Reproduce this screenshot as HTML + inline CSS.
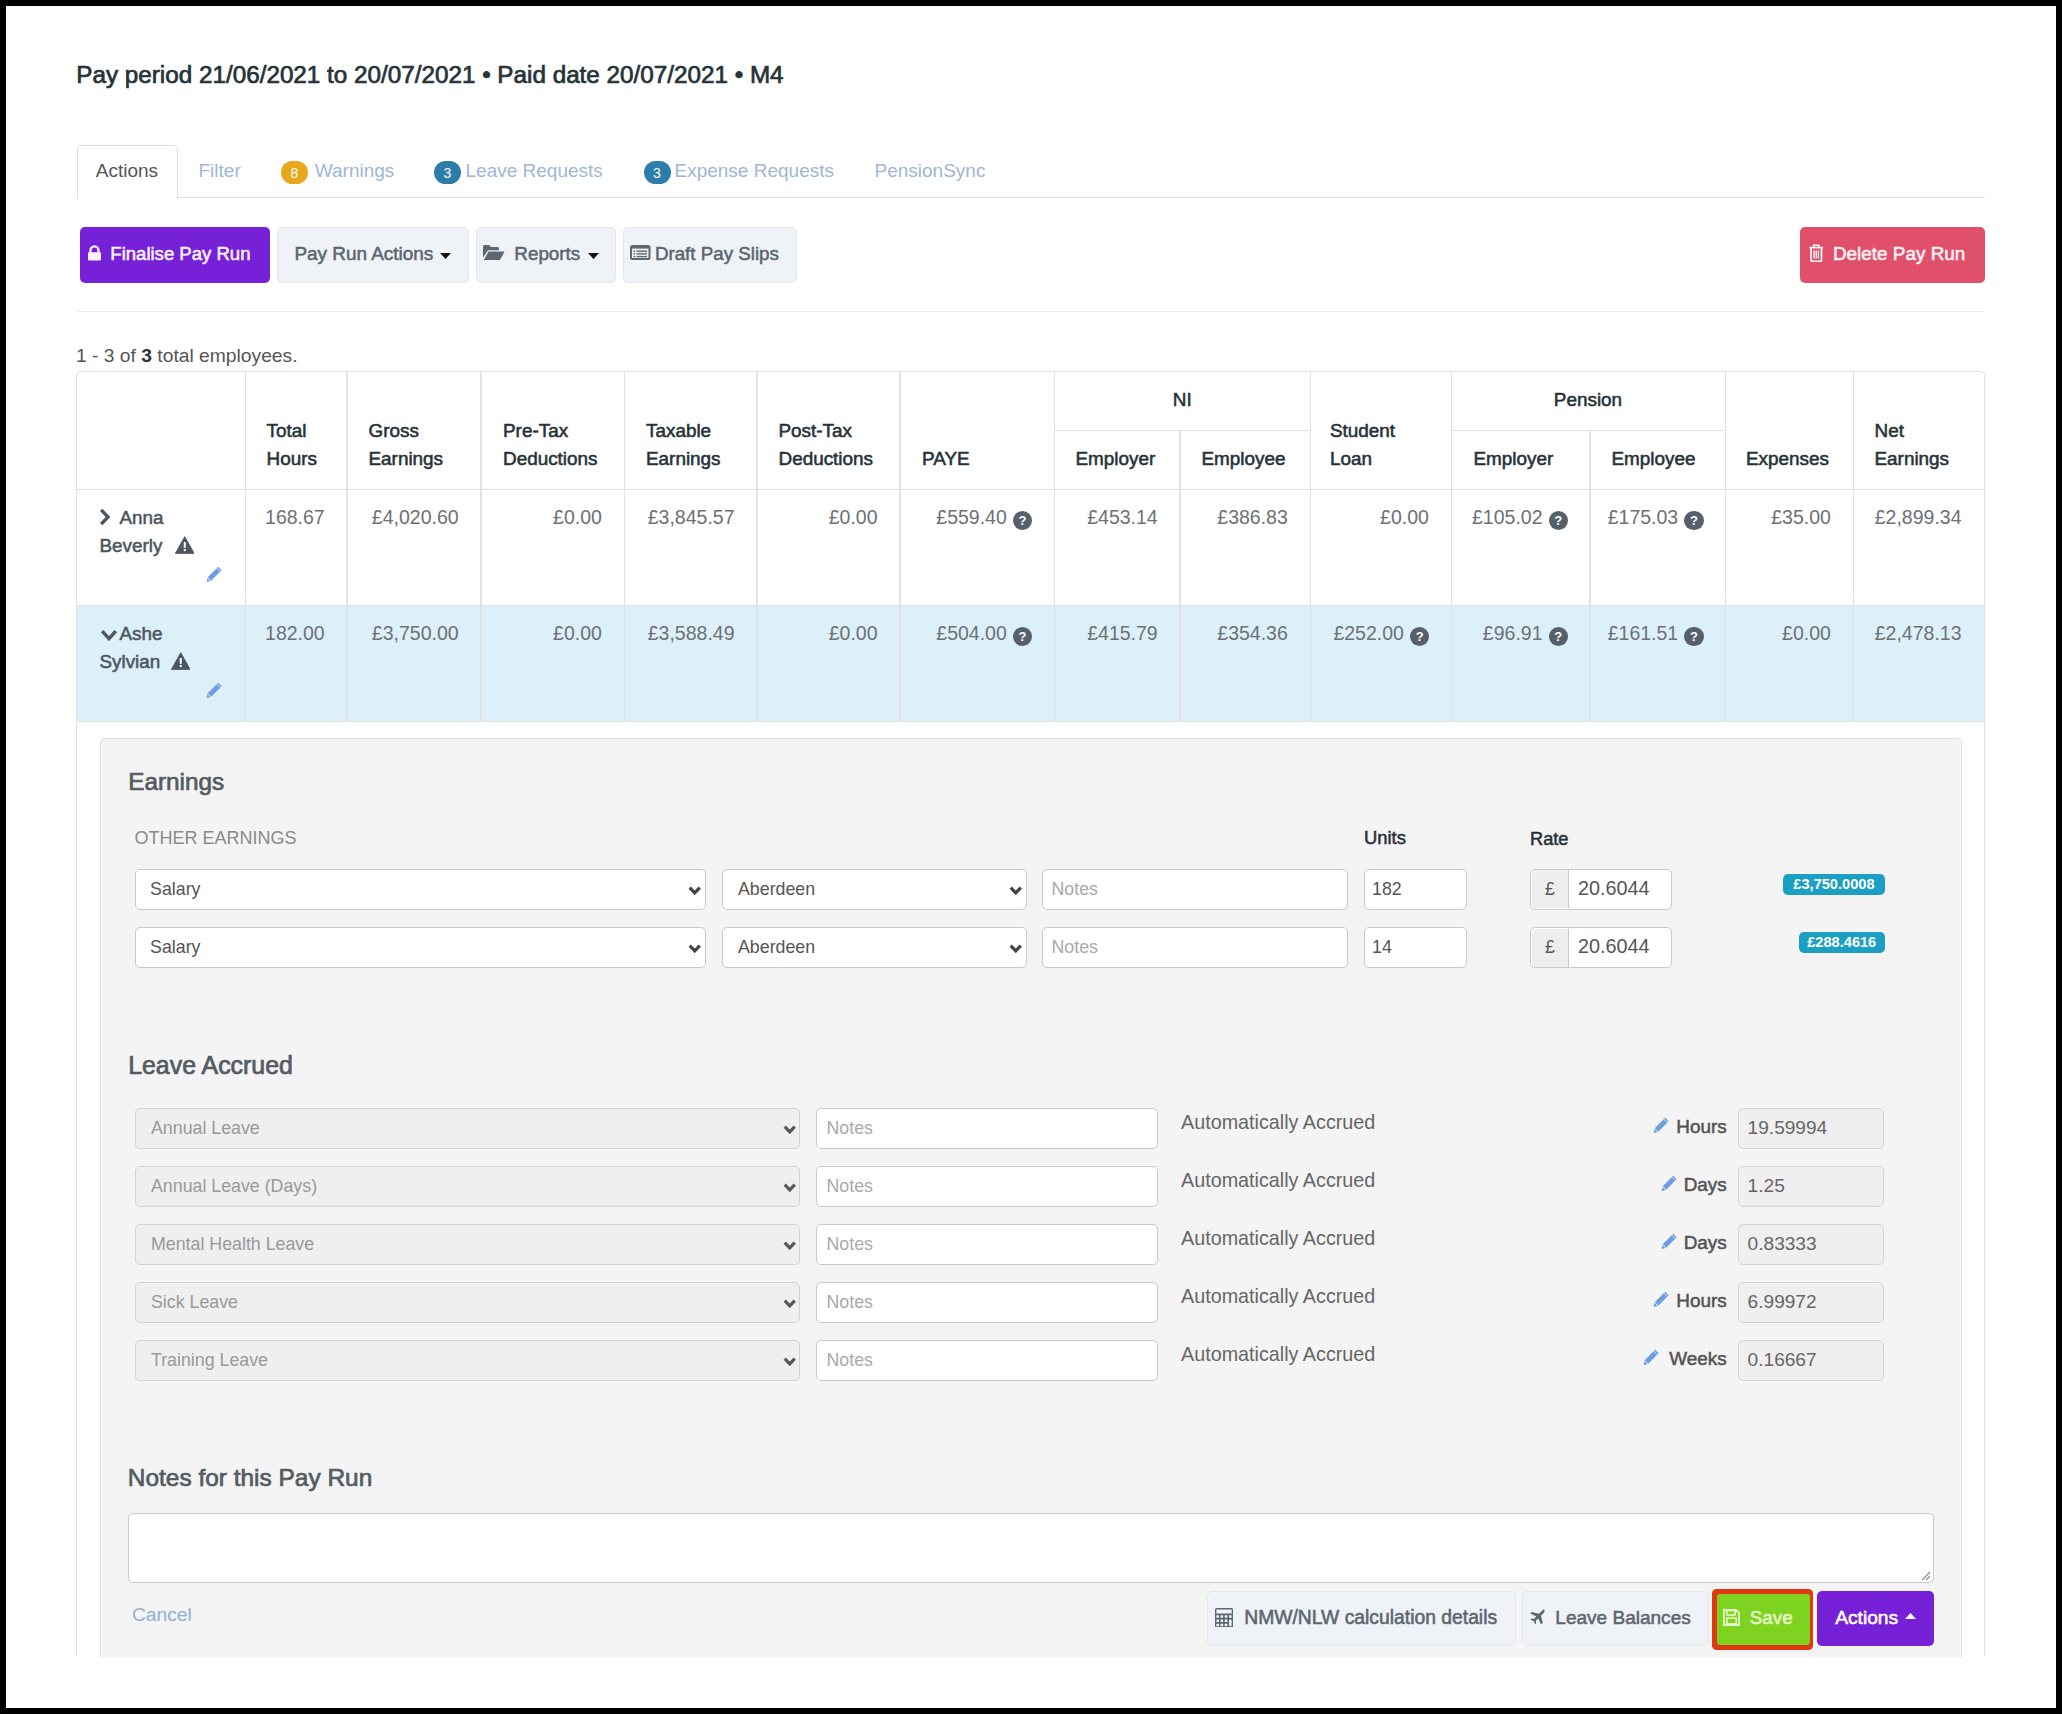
<!DOCTYPE html>
<html><head><meta charset="utf-8"><title>Pay Run</title>
<style>
html,body{margin:0;padding:0;}
body{width:2062px;height:1714px;background:#000;position:relative;overflow:hidden;font-family:'Liberation Sans', sans-serif;}
.t{position:absolute;white-space:nowrap;font-family:'Liberation Sans', sans-serif;}
.b{position:absolute;display:block;}
</style></head><body>
<div class="b" style="left:6.00px;top:6.00px;width:2050.00px;height:1702.00px;background:#fff;"></div>
<div class="t" style="left:76.30px;top:62.77px;font-size:24.25px;line-height:24.25px;font-weight:400;color:#263238;-webkit-text-stroke:0.71px #263238;">Pay period 21/06/2021 to 20/07/2021 • Paid date 20/07/2021 • M4</div>
<div class="b" style="left:77.00px;top:196.60px;width:1908.00px;height:1.50px;background:#dedede;"></div>
<div class="b" style="left:76.50px;top:144.50px;width:101.00px;height:54.50px;background:#fff;border:1.5px solid #dedede;border-bottom:none;border-radius:5px 5px 0 0;box-sizing:border-box;"></div>
<div class="t" style="left:95.80px;top:160.62px;font-size:19px;line-height:19px;font-weight:400;color:#555;">Actions</div>
<div class="t" style="left:198.50px;top:160.62px;font-size:19px;line-height:19px;font-weight:400;color:#a0b6d6;">Filter</div>
<div class="b" style="left:281.00px;top:161.00px;width:27.00px;height:23.00px;background:#e9a81c;border-radius:12px;"></div>
<div class="t" style="left:-5.50px;width:600px;text-align:center;top:165.65px;font-size:14px;line-height:14px;font-weight:400;color:#fff;">8</div>
<div class="t" style="left:314.80px;top:160.62px;font-size:19px;line-height:19px;font-weight:400;color:#a0b6d6;">Warnings</div>
<div class="b" style="left:434.00px;top:161.00px;width:27.00px;height:23.00px;background:#2c7da9;border-radius:12px;"></div>
<div class="t" style="left:147.50px;width:600px;text-align:center;top:165.65px;font-size:14px;line-height:14px;font-weight:400;color:#fff;">3</div>
<div class="t" style="left:465.50px;top:160.62px;font-size:19px;line-height:19px;font-weight:400;color:#a0b6d6;">Leave Requests</div>
<div class="b" style="left:643.50px;top:161.00px;width:27.00px;height:23.00px;background:#2c7da9;border-radius:12px;"></div>
<div class="t" style="left:357.00px;width:600px;text-align:center;top:165.65px;font-size:14px;line-height:14px;font-weight:400;color:#fff;">3</div>
<div class="t" style="left:674.50px;top:160.62px;font-size:19px;line-height:19px;font-weight:400;color:#a0b6d6;">Expense Requests</div>
<div class="t" style="left:874.50px;top:160.62px;font-size:19px;line-height:19px;font-weight:400;color:#a0b6d6;">PensionSync</div>
<div class="b" style="left:80.00px;top:226.50px;width:190.00px;height:56.50px;background:#7620d8;border-radius:5px;"></div>
<svg class="b" style="left:87.90px;top:245.00px;width:13.00px;height:15.50px;" viewBox="0 0 13 15.5" preserveAspectRatio="none"><path d="M2.5 7.8V5.3a4 4 0 0 1 8 0V7.8" stroke="#fdf2ff" stroke-width="2.3" fill="none"/><rect x="0" y="7.3" width="13" height="8.1" rx="1" fill="#fdf2ff"/></svg>
<div class="t" style="left:110.30px;top:245.29px;font-size:18.56px;line-height:18.56px;font-weight:400;color:#fbf0ff;-webkit-text-stroke:0.54px #fbf0ff;">Finalise Pay Run</div>
<div class="b" style="left:276.50px;top:226.50px;width:192.50px;height:56.50px;background:#eff3f7;border:1.5px solid #e3e7eb;border-radius:5px;box-sizing:border-box;"></div>
<div class="t" style="left:294.40px;top:244.97px;font-size:18.94px;line-height:18.94px;font-weight:400;color:#5c6670;-webkit-text-stroke:0.55px #5c6670;">Pay Run Actions</div>
<svg class="b" style="left:440.00px;top:252.50px;width:11.00px;height:6.00px;" viewBox="0 0 11 6" preserveAspectRatio="none"><path d="M0 0H11L5.5 6z" fill="#111"/></svg>
<div class="b" style="left:475.50px;top:226.50px;width:140.50px;height:56.50px;background:#eff3f7;border:1.5px solid #e3e7eb;border-radius:5px;box-sizing:border-box;"></div>
<svg class="b" style="left:483.00px;top:244.50px;width:21.50px;height:15.00px;" viewBox="0 0 21.5 15" preserveAspectRatio="none"><path d="M0 1.6A1.6 1.6 0 0 1 1.6 0H6L8 2H14.4A1.6 1.6 0 0 1 16 3.6V5.2H5L0 12.6Z" fill="#5d6770"/><path d="M5.6 6.6H21.5L17 15H0.8Z" fill="#5d6770"/></svg>
<div class="t" style="left:514.30px;top:245.04px;font-size:18.85px;line-height:18.85px;font-weight:400;color:#5c6670;-webkit-text-stroke:0.55px #5c6670;">Reports</div>
<svg class="b" style="left:587.50px;top:252.50px;width:11.00px;height:6.00px;" viewBox="0 0 11 6" preserveAspectRatio="none"><path d="M0 0H11L5.5 6z" fill="#111"/></svg>
<div class="b" style="left:622.50px;top:226.50px;width:174.50px;height:56.50px;background:#eff3f7;border:1.5px solid #e3e7eb;border-radius:5px;box-sizing:border-box;"></div>
<svg class="b" style="left:630.00px;top:245.00px;width:20.50px;height:15.00px;" viewBox="0 0 20.5 15" preserveAspectRatio="none"><rect x="1" y="1" width="18.5" height="13" rx="1.6" fill="none" stroke="#5d6770" stroke-width="2"/><rect x="1" y="1" width="18.5" height="2.6" fill="#5d6770"/><rect x="3.5" y="5.5" width="1.6" height="1.4" fill="#5d6770"/><rect x="6.5" y="5.5" width="10.5" height="1.4" fill="#5d6770"/><rect x="3.5" y="8.2" width="1.6" height="1.4" fill="#5d6770"/><rect x="6.5" y="8.2" width="10.5" height="1.4" fill="#5d6770"/><rect x="3.5" y="10.9" width="1.6" height="1.4" fill="#5d6770"/><rect x="6.5" y="10.9" width="10.5" height="1.4" fill="#5d6770"/></svg>
<div class="t" style="left:654.90px;top:245.13px;font-size:18.75px;line-height:18.75px;font-weight:400;color:#5c6670;-webkit-text-stroke:0.54px #5c6670;">Draft Pay Slips</div>
<div class="b" style="left:1800.00px;top:226.50px;width:185.00px;height:56.00px;background:#e1506a;border-radius:5px;"></div>
<svg class="b" style="left:1809.00px;top:244.00px;width:14.50px;height:18.00px;" viewBox="0 0 14.5 18" preserveAspectRatio="none"><path d="M0.5 3.6H14" stroke="#fff" stroke-width="1.6"/><path d="M4.6 3.4V1.2H9.9V3.4" stroke="#fff" stroke-width="1.5" fill="none"/><path d="M2 3.6V16.2A1.2 1.2 0 0 0 3.2 17.3H11.3A1.2 1.2 0 0 0 12.5 16.2V3.6" stroke="#fff" stroke-width="1.6" fill="none"/><path d="M5.1 6.5V14.5M7.25 6.5V14.5M9.4 6.5V14.5" stroke="#fff" stroke-width="1.3"/></svg>
<div class="t" style="left:1832.90px;top:244.98px;font-size:18.92px;line-height:18.92px;font-weight:400;color:#fff2f4;-webkit-text-stroke:0.55px #fff2f4;">Delete Pay Run</div>
<div class="b" style="left:77.00px;top:310.50px;width:1908.00px;height:1.50px;background:#ececec;"></div>
<div class="t" style="left:76.00px;top:346.00px;font-size:19.25px;line-height:19.25px;font-weight:400;color:#555;">1 - 3 of <b style="color:#333">3</b> total employees.</div>
<div class="b" style="left:77.00px;top:605.50px;width:1907.00px;height:116.00px;background:#dcf0f9;"></div>
<div class="b" style="left:76.20px;top:370.70px;width:1908.60px;height:1285.80px;border:1.6px solid #e2e2e2;border-bottom:none;border-radius:5px 5px 0 0;box-sizing:border-box;"></div>
<div class="b" style="left:77.00px;top:488.70px;width:1907.00px;height:1.60px;background:#e2e2e2;"></div>
<div class="b" style="left:77.00px;top:604.70px;width:1907.00px;height:1.60px;background:#e2e2e2;"></div>
<div class="b" style="left:77.00px;top:720.70px;width:1907.00px;height:1.60px;background:#e2e2e2;"></div>
<div class="b" style="left:1054.30px;top:429.70px;width:256.00px;height:1.60px;background:#e2e2e2;"></div>
<div class="b" style="left:1451.40px;top:429.70px;width:274.30px;height:1.60px;background:#e2e2e2;"></div>
<div class="b" style="left:244.60px;top:370.50px;width:1.60px;height:351.00px;background:#e2e2e2;"></div>
<div class="b" style="left:346.40px;top:370.50px;width:1.60px;height:351.00px;background:#e2e2e2;"></div>
<div class="b" style="left:480.30px;top:370.50px;width:1.60px;height:351.00px;background:#e2e2e2;"></div>
<div class="b" style="left:623.60px;top:370.50px;width:1.60px;height:351.00px;background:#e2e2e2;"></div>
<div class="b" style="left:756.20px;top:370.50px;width:1.60px;height:351.00px;background:#e2e2e2;"></div>
<div class="b" style="left:899.20px;top:370.50px;width:1.60px;height:351.00px;background:#e2e2e2;"></div>
<div class="b" style="left:1053.50px;top:370.50px;width:1.60px;height:351.00px;background:#e2e2e2;"></div>
<div class="b" style="left:1179.40px;top:430.50px;width:1.60px;height:291.00px;background:#e2e2e2;"></div>
<div class="b" style="left:1309.50px;top:370.50px;width:1.60px;height:351.00px;background:#e2e2e2;"></div>
<div class="b" style="left:1450.60px;top:370.50px;width:1.60px;height:351.00px;background:#e2e2e2;"></div>
<div class="b" style="left:1589.20px;top:430.50px;width:1.60px;height:291.00px;background:#e2e2e2;"></div>
<div class="b" style="left:1724.90px;top:370.50px;width:1.60px;height:351.00px;background:#e2e2e2;"></div>
<div class="b" style="left:1852.60px;top:370.50px;width:1.60px;height:351.00px;background:#e2e2e2;"></div>
<div class="t" style="left:266.50px;top:421.50px;font-size:18.9px;line-height:18.9px;font-weight:400;color:#263238;-webkit-text-stroke:0.55px #263238;">Total</div>
<div class="t" style="left:266.50px;top:449.90px;font-size:18.9px;line-height:18.9px;font-weight:400;color:#263238;-webkit-text-stroke:0.55px #263238;">Hours</div>
<div class="t" style="left:368.50px;top:421.50px;font-size:18.9px;line-height:18.9px;font-weight:400;color:#263238;-webkit-text-stroke:0.55px #263238;">Gross</div>
<div class="t" style="left:368.50px;top:449.90px;font-size:18.9px;line-height:18.9px;font-weight:400;color:#263238;-webkit-text-stroke:0.55px #263238;">Earnings</div>
<div class="t" style="left:503.00px;top:421.50px;font-size:18.9px;line-height:18.9px;font-weight:400;color:#263238;-webkit-text-stroke:0.55px #263238;">Pre-Tax</div>
<div class="t" style="left:503.00px;top:449.90px;font-size:18.9px;line-height:18.9px;font-weight:400;color:#263238;-webkit-text-stroke:0.55px #263238;">Deductions</div>
<div class="t" style="left:646.00px;top:421.50px;font-size:18.9px;line-height:18.9px;font-weight:400;color:#263238;-webkit-text-stroke:0.55px #263238;">Taxable</div>
<div class="t" style="left:646.00px;top:449.90px;font-size:18.9px;line-height:18.9px;font-weight:400;color:#263238;-webkit-text-stroke:0.55px #263238;">Earnings</div>
<div class="t" style="left:778.50px;top:421.50px;font-size:18.9px;line-height:18.9px;font-weight:400;color:#263238;-webkit-text-stroke:0.55px #263238;">Post-Tax</div>
<div class="t" style="left:778.50px;top:449.90px;font-size:18.9px;line-height:18.9px;font-weight:400;color:#263238;-webkit-text-stroke:0.55px #263238;">Deductions</div>
<div class="t" style="left:922.00px;top:449.90px;font-size:18.9px;line-height:18.9px;font-weight:400;color:#263238;-webkit-text-stroke:0.55px #263238;">PAYE</div>
<div class="t" style="left:882.30px;width:600px;text-align:center;top:390.80px;font-size:18.9px;line-height:18.9px;font-weight:400;color:#263238;-webkit-text-stroke:0.55px #263238;">NI</div>
<div class="t" style="left:1075.50px;top:449.90px;font-size:18.9px;line-height:18.9px;font-weight:400;color:#263238;-webkit-text-stroke:0.55px #263238;">Employer</div>
<div class="t" style="left:1201.50px;top:449.90px;font-size:18.9px;line-height:18.9px;font-weight:400;color:#263238;-webkit-text-stroke:0.55px #263238;">Employee</div>
<div class="t" style="left:1330.00px;top:421.50px;font-size:18.9px;line-height:18.9px;font-weight:400;color:#263238;-webkit-text-stroke:0.55px #263238;">Student</div>
<div class="t" style="left:1330.00px;top:449.90px;font-size:18.9px;line-height:18.9px;font-weight:400;color:#263238;-webkit-text-stroke:0.55px #263238;">Loan</div>
<div class="t" style="left:1288.00px;width:600px;text-align:center;top:390.80px;font-size:18.9px;line-height:18.9px;font-weight:400;color:#263238;-webkit-text-stroke:0.55px #263238;">Pension</div>
<div class="t" style="left:1473.50px;top:449.90px;font-size:18.9px;line-height:18.9px;font-weight:400;color:#263238;-webkit-text-stroke:0.55px #263238;">Employer</div>
<div class="t" style="left:1611.50px;top:449.90px;font-size:18.9px;line-height:18.9px;font-weight:400;color:#263238;-webkit-text-stroke:0.55px #263238;">Employee</div>
<div class="t" style="left:1746.00px;top:449.90px;font-size:18.9px;line-height:18.9px;font-weight:400;color:#263238;-webkit-text-stroke:0.55px #263238;">Expenses</div>
<div class="t" style="left:1874.50px;top:421.50px;font-size:18.9px;line-height:18.9px;font-weight:400;color:#263238;-webkit-text-stroke:0.55px #263238;">Net</div>
<div class="t" style="left:1874.50px;top:449.90px;font-size:18.9px;line-height:18.9px;font-weight:400;color:#263238;-webkit-text-stroke:0.55px #263238;">Earnings</div>
<svg class="b" style="left:99.30px;top:508.00px;width:11.50px;height:18.00px;" viewBox="0 0 11.5 18" preserveAspectRatio="none"><path d="M2.2 1.9L9 9L2.2 16.1" stroke="#4d5660" stroke-width="3.4" fill="none"/></svg>
<div class="t" style="left:119.50px;top:508.74px;font-size:18.85px;line-height:18.85px;font-weight:400;color:#4d5660;-webkit-text-stroke:0.55px #4d5660;">Anna</div>
<div class="t" style="left:99.50px;top:536.74px;font-size:18.85px;line-height:18.85px;font-weight:400;color:#4d5660;-webkit-text-stroke:0.55px #4d5660;">Beverly</div>
<svg class="b" style="left:174.80px;top:536.20px;width:19.50px;height:18.00px;" viewBox="0 0 19.5 18" preserveAspectRatio="none"><path d="M9.75 0.6L19.2 17.4H0.3Z" fill="#4d5660" stroke="#4d5660" stroke-width="0.8" stroke-linejoin="round"/><rect x="8.75" y="6" width="2" height="5.8" fill="#fff"/><rect x="8.75" y="13" width="2" height="2.1" fill="#fff"/></svg>
<svg class="b" style="left:205.50px;top:566.30px;width:16.50px;height:16.50px;" viewBox="0 0 16.5 16.5" preserveAspectRatio="none"><path d="M12.2 0.8L15.7 4.3L5.2 14.8L1.7 11.3Z" fill="#6e9de0"/><path d="M1.4 11.9L4.6 15.1L0.6 16Z" fill="#6e9de0"/><path d="M11 2.2L14.3 5.5" stroke="#fff" stroke-width="0.9" opacity="0.8"/><path d="M2.4 12.4L4.1 14.1" stroke="#fff" stroke-width="0.8" opacity="0.7"/></svg>
<svg class="b" style="left:99.50px;top:628.70px;width:18.00px;height:12.50px;" viewBox="0 0 18 12.5" preserveAspectRatio="none"><path d="M2.2 2.1L9 9.6L15.8 2.1" stroke="#4d5660" stroke-width="3.4" fill="none"/></svg>
<div class="t" style="left:119.50px;top:624.94px;font-size:18.85px;line-height:18.85px;font-weight:400;color:#4d5660;-webkit-text-stroke:0.55px #4d5660;">Ashe</div>
<div class="t" style="left:99.50px;top:652.94px;font-size:18.85px;line-height:18.85px;font-weight:400;color:#4d5660;-webkit-text-stroke:0.55px #4d5660;">Sylvian</div>
<svg class="b" style="left:170.80px;top:652.00px;width:19.50px;height:18.00px;" viewBox="0 0 19.5 18" preserveAspectRatio="none"><path d="M9.75 0.6L19.2 17.4H0.3Z" fill="#4d5660" stroke="#4d5660" stroke-width="0.8" stroke-linejoin="round"/><rect x="8.75" y="6" width="2" height="5.8" fill="#fff"/><rect x="8.75" y="13" width="2" height="2.1" fill="#fff"/></svg>
<svg class="b" style="left:205.50px;top:682.00px;width:16.50px;height:16.50px;" viewBox="0 0 16.5 16.5" preserveAspectRatio="none"><path d="M12.2 0.8L15.7 4.3L5.2 14.8L1.7 11.3Z" fill="#6e9de0"/><path d="M1.4 11.9L4.6 15.1L0.6 16Z" fill="#6e9de0"/><path d="M11 2.2L14.3 5.5" stroke="#fff" stroke-width="0.9" opacity="0.8"/><path d="M2.4 12.4L4.1 14.1" stroke="#fff" stroke-width="0.8" opacity="0.7"/></svg>
<div class="t" style="right:1737.30px;top:508.09px;font-size:19.5px;line-height:19.5px;font-weight:400;color:#6d7175;">168.67</div>
<div class="t" style="right:1603.40px;top:508.09px;font-size:19.5px;line-height:19.5px;font-weight:400;color:#6d7175;">£4,020.60</div>
<div class="t" style="right:1460.10px;top:508.09px;font-size:19.5px;line-height:19.5px;font-weight:400;color:#6d7175;">£0.00</div>
<div class="t" style="right:1327.50px;top:508.09px;font-size:19.5px;line-height:19.5px;font-weight:400;color:#6d7175;">£3,845.57</div>
<div class="t" style="right:1184.50px;top:508.09px;font-size:19.5px;line-height:19.5px;font-weight:400;color:#6d7175;">£0.00</div>
<div class="b" style="left:1012.80px;top:510.60px;width:19.5px;height:19.5px;border-radius:50%;background:#56606a;color:#fff;font:700 13px/19.5px 'Liberation Sans', sans-serif;text-align:center;">?</div>
<div class="t" style="right:1055.20px;top:508.09px;font-size:19.5px;line-height:19.5px;font-weight:400;color:#6d7175;">£559.40</div>
<div class="t" style="right:904.30px;top:508.09px;font-size:19.5px;line-height:19.5px;font-weight:400;color:#6d7175;">£453.14</div>
<div class="t" style="right:774.20px;top:508.09px;font-size:19.5px;line-height:19.5px;font-weight:400;color:#6d7175;">£386.83</div>
<div class="t" style="right:633.10px;top:508.09px;font-size:19.5px;line-height:19.5px;font-weight:400;color:#6d7175;">£0.00</div>
<div class="b" style="left:1548.50px;top:510.60px;width:19.5px;height:19.5px;border-radius:50%;background:#56606a;color:#fff;font:700 13px/19.5px 'Liberation Sans', sans-serif;text-align:center;">?</div>
<div class="t" style="right:519.50px;top:508.09px;font-size:19.5px;line-height:19.5px;font-weight:400;color:#6d7175;">£105.02</div>
<div class="b" style="left:1684.20px;top:510.60px;width:19.5px;height:19.5px;border-radius:50%;background:#56606a;color:#fff;font:700 13px/19.5px 'Liberation Sans', sans-serif;text-align:center;">?</div>
<div class="t" style="right:383.80px;top:508.09px;font-size:19.5px;line-height:19.5px;font-weight:400;color:#6d7175;">£175.03</div>
<div class="t" style="right:231.10px;top:508.09px;font-size:19.5px;line-height:19.5px;font-weight:400;color:#6d7175;">£35.00</div>
<div class="t" style="right:100.50px;top:508.09px;font-size:19.5px;line-height:19.5px;font-weight:400;color:#6d7175;">£2,899.34</div>
<div class="t" style="right:1737.30px;top:624.09px;font-size:19.5px;line-height:19.5px;font-weight:400;color:#6d7175;">182.00</div>
<div class="t" style="right:1603.40px;top:624.09px;font-size:19.5px;line-height:19.5px;font-weight:400;color:#6d7175;">£3,750.00</div>
<div class="t" style="right:1460.10px;top:624.09px;font-size:19.5px;line-height:19.5px;font-weight:400;color:#6d7175;">£0.00</div>
<div class="t" style="right:1327.50px;top:624.09px;font-size:19.5px;line-height:19.5px;font-weight:400;color:#6d7175;">£3,588.49</div>
<div class="t" style="right:1184.50px;top:624.09px;font-size:19.5px;line-height:19.5px;font-weight:400;color:#6d7175;">£0.00</div>
<div class="b" style="left:1012.80px;top:626.60px;width:19.5px;height:19.5px;border-radius:50%;background:#56606a;color:#fff;font:700 13px/19.5px 'Liberation Sans', sans-serif;text-align:center;">?</div>
<div class="t" style="right:1055.20px;top:624.09px;font-size:19.5px;line-height:19.5px;font-weight:400;color:#6d7175;">£504.00</div>
<div class="t" style="right:904.30px;top:624.09px;font-size:19.5px;line-height:19.5px;font-weight:400;color:#6d7175;">£415.79</div>
<div class="t" style="right:774.20px;top:624.09px;font-size:19.5px;line-height:19.5px;font-weight:400;color:#6d7175;">£354.36</div>
<div class="b" style="left:1409.90px;top:626.60px;width:19.5px;height:19.5px;border-radius:50%;background:#56606a;color:#fff;font:700 13px/19.5px 'Liberation Sans', sans-serif;text-align:center;">?</div>
<div class="t" style="right:658.10px;top:624.09px;font-size:19.5px;line-height:19.5px;font-weight:400;color:#6d7175;">£252.00</div>
<div class="b" style="left:1548.50px;top:626.60px;width:19.5px;height:19.5px;border-radius:50%;background:#56606a;color:#fff;font:700 13px/19.5px 'Liberation Sans', sans-serif;text-align:center;">?</div>
<div class="t" style="right:519.50px;top:624.09px;font-size:19.5px;line-height:19.5px;font-weight:400;color:#6d7175;">£96.91</div>
<div class="b" style="left:1684.20px;top:626.60px;width:19.5px;height:19.5px;border-radius:50%;background:#56606a;color:#fff;font:700 13px/19.5px 'Liberation Sans', sans-serif;text-align:center;">?</div>
<div class="t" style="right:383.80px;top:624.09px;font-size:19.5px;line-height:19.5px;font-weight:400;color:#6d7175;">£161.51</div>
<div class="t" style="right:231.10px;top:624.09px;font-size:19.5px;line-height:19.5px;font-weight:400;color:#6d7175;">£0.00</div>
<div class="t" style="right:100.50px;top:624.09px;font-size:19.5px;line-height:19.5px;font-weight:400;color:#6d7175;">£2,478.13</div>
<div class="b" style="left:99.50px;top:737.50px;width:1862.50px;height:919.00px;background:#f4f4f4;border:1.5px solid #e2e2e2;border-bottom:none;border-radius:5px 5px 0 0;box-sizing:border-box;"></div>
<div class="t" style="left:128.20px;top:770.43px;font-size:24.3px;line-height:24.3px;font-weight:400;color:#545b62;-webkit-text-stroke:0.71px #545b62;">Earnings</div>
<div class="t" style="left:134.50px;top:828.76px;font-size:18px;line-height:18px;font-weight:400;color:#8a8a8a;">OTHER EARNINGS</div>
<div class="t" style="left:1364.00px;top:829.42px;font-size:18.4px;line-height:18.4px;font-weight:400;color:#263238;-webkit-text-stroke:0.53px #263238;">Units</div>
<div class="t" style="left:1530.00px;top:829.59px;font-size:18.2px;line-height:18.2px;font-weight:400;color:#263238;-webkit-text-stroke:0.53px #263238;">Rate</div>
<div class="b" style="left:135.00px;top:868.70px;width:571.00px;height:41.30px;background:#fff;border:1.6px solid #c9c9c9;border-radius:5px;box-sizing:border-box;"></div>
<div class="t" style="left:150.10px;top:880.63px;font-size:17.8px;line-height:17.8px;font-weight:400;color:#555;">Salary</div>
<svg class="b" style="left:687.50px;top:885.60px;width:13.50px;height:9.30px;" viewBox="0 0 13.5 9.3" preserveAspectRatio="none"><path d="M1.7 1.7L6.75 6.9L11.8 1.7" stroke="#444" stroke-width="3.2" fill="none"/></svg>
<div class="b" style="left:721.60px;top:868.70px;width:305.70px;height:41.30px;background:#fff;border:1.6px solid #c9c9c9;border-radius:5px;box-sizing:border-box;"></div>
<div class="t" style="left:738.00px;top:880.63px;font-size:17.8px;line-height:17.8px;font-weight:400;color:#555;">Aberdeen</div>
<svg class="b" style="left:1008.50px;top:885.60px;width:13.50px;height:9.30px;" viewBox="0 0 13.5 9.3" preserveAspectRatio="none"><path d="M1.7 1.7L6.75 6.9L11.8 1.7" stroke="#444" stroke-width="3.2" fill="none"/></svg>
<div class="b" style="left:1042.40px;top:868.70px;width:305.60px;height:41.30px;background:#fff;border:1.6px solid #c9c9c9;border-radius:5px;box-sizing:border-box;"></div>
<div class="t" style="left:1051.50px;top:880.63px;font-size:17.8px;line-height:17.8px;font-weight:400;color:#aaa;">Notes</div>
<div class="b" style="left:1363.50px;top:868.70px;width:103.70px;height:41.30px;background:#fff;border:1.6px solid #c9c9c9;border-radius:5px;box-sizing:border-box;"></div>
<div class="t" style="left:1372.00px;top:880.63px;font-size:17.8px;line-height:17.8px;font-weight:400;color:#555;">182</div>
<div class="b" style="left:1530.40px;top:868.70px;width:141.60px;height:41.30px;background:#fff;border:1.6px solid #c9c9c9;border-radius:5px;box-sizing:border-box;"></div>
<div class="b" style="left:1532.00px;top:870.30px;width:36.20px;height:38.10px;background:#eeeeee;border-right:1.6px solid #c9c9c9;border-radius:4px 0 0 4px;"></div>
<div class="t" style="left:1544.90px;top:880.63px;font-size:17.8px;line-height:17.8px;font-weight:400;color:#555;">£</div>
<div class="t" style="left:1577.90px;top:878.94px;font-size:19.8px;line-height:19.8px;font-weight:400;color:#555;">20.6044</div>
<div class="b" style="left:1783.20px;top:873.90px;width:101.50px;height:20.80px;background:#1b9fc2;border-radius:5px;"></div>
<div class="t" style="left:1533.95px;width:600px;text-align:center;top:876.94px;font-size:14.6px;line-height:14.6px;font-weight:700;color:#fff;">£3,750.0008</div>
<div class="b" style="left:135.00px;top:927.00px;width:571.00px;height:41.30px;background:#fff;border:1.6px solid #c9c9c9;border-radius:5px;box-sizing:border-box;"></div>
<div class="t" style="left:150.10px;top:938.93px;font-size:17.8px;line-height:17.8px;font-weight:400;color:#555;">Salary</div>
<svg class="b" style="left:687.50px;top:943.90px;width:13.50px;height:9.30px;" viewBox="0 0 13.5 9.3" preserveAspectRatio="none"><path d="M1.7 1.7L6.75 6.9L11.8 1.7" stroke="#444" stroke-width="3.2" fill="none"/></svg>
<div class="b" style="left:721.60px;top:927.00px;width:305.70px;height:41.30px;background:#fff;border:1.6px solid #c9c9c9;border-radius:5px;box-sizing:border-box;"></div>
<div class="t" style="left:738.00px;top:938.93px;font-size:17.8px;line-height:17.8px;font-weight:400;color:#555;">Aberdeen</div>
<svg class="b" style="left:1008.50px;top:943.90px;width:13.50px;height:9.30px;" viewBox="0 0 13.5 9.3" preserveAspectRatio="none"><path d="M1.7 1.7L6.75 6.9L11.8 1.7" stroke="#444" stroke-width="3.2" fill="none"/></svg>
<div class="b" style="left:1042.40px;top:927.00px;width:305.60px;height:41.30px;background:#fff;border:1.6px solid #c9c9c9;border-radius:5px;box-sizing:border-box;"></div>
<div class="t" style="left:1051.50px;top:938.93px;font-size:17.8px;line-height:17.8px;font-weight:400;color:#aaa;">Notes</div>
<div class="b" style="left:1363.50px;top:927.00px;width:103.70px;height:41.30px;background:#fff;border:1.6px solid #c9c9c9;border-radius:5px;box-sizing:border-box;"></div>
<div class="t" style="left:1372.00px;top:938.93px;font-size:17.8px;line-height:17.8px;font-weight:400;color:#555;">14</div>
<div class="b" style="left:1530.40px;top:927.00px;width:141.60px;height:41.30px;background:#fff;border:1.6px solid #c9c9c9;border-radius:5px;box-sizing:border-box;"></div>
<div class="b" style="left:1532.00px;top:928.60px;width:36.20px;height:38.10px;background:#eeeeee;border-right:1.6px solid #c9c9c9;border-radius:4px 0 0 4px;"></div>
<div class="t" style="left:1544.90px;top:938.93px;font-size:17.8px;line-height:17.8px;font-weight:400;color:#555;">£</div>
<div class="t" style="left:1577.90px;top:937.24px;font-size:19.8px;line-height:19.8px;font-weight:400;color:#555;">20.6044</div>
<div class="b" style="left:1798.80px;top:932.20px;width:85.90px;height:20.80px;background:#1b9fc2;border-radius:5px;"></div>
<div class="t" style="left:1541.75px;width:600px;text-align:center;top:935.24px;font-size:14.6px;line-height:14.6px;font-weight:700;color:#fff;">£288.4616</div>
<div class="t" style="left:128.20px;top:1053.22px;font-size:24.9px;line-height:24.9px;font-weight:400;color:#545b62;-webkit-text-stroke:0.73px #545b62;">Leave Accrued</div>
<div class="b" style="left:135.40px;top:1107.70px;width:664.90px;height:41.20px;background:#efefef;border:1.6px solid #d3d3d3;border-radius:5px;box-sizing:border-box;"></div>
<div class="t" style="left:151.00px;top:1119.63px;font-size:17.8px;line-height:17.8px;font-weight:400;color:#999;">Annual Leave</div>
<svg class="b" style="left:782.50px;top:1124.60px;width:13.50px;height:9.30px;" viewBox="0 0 13.5 9.3" preserveAspectRatio="none"><path d="M1.7 1.7L6.75 6.9L11.8 1.7" stroke="#585858" stroke-width="3.2" fill="none"/></svg>
<div class="b" style="left:816.30px;top:1107.70px;width:341.90px;height:41.20px;background:#fff;border:1.6px solid #c9c9c9;border-radius:5px;box-sizing:border-box;"></div>
<div class="t" style="left:826.50px;top:1119.63px;font-size:17.8px;line-height:17.8px;font-weight:400;color:#aaa;">Notes</div>
<div class="t" style="left:1181.00px;top:1112.58px;font-size:19.75px;line-height:19.75px;font-weight:400;color:#666;">Automatically Accrued</div>
<div class="t" style="right:335.30px;top:1117.70px;font-size:18.9px;line-height:18.9px;font-weight:400;color:#555;-webkit-text-stroke:0.55px #555;">Hours</div>
<svg class="b" style="left:1652.60px;top:1117.30px;width:16.50px;height:16.50px;" viewBox="0 0 16.5 16.5" preserveAspectRatio="none"><path d="M12.2 0.8L15.7 4.3L5.2 14.8L1.7 11.3Z" fill="#6e9de0"/><path d="M1.4 11.9L4.6 15.1L0.6 16Z" fill="#6e9de0"/><path d="M11 2.2L14.3 5.5" stroke="#fff" stroke-width="0.9" opacity="0.8"/><path d="M2.4 12.4L4.1 14.1" stroke="#fff" stroke-width="0.8" opacity="0.7"/></svg>
<div class="b" style="left:1738.40px;top:1107.70px;width:145.60px;height:41.20px;background:#efefef;border:1.6px solid #d3d3d3;border-radius:5px;box-sizing:border-box;"></div>
<div class="t" style="left:1747.60px;top:1117.93px;font-size:19.1px;line-height:19.1px;font-weight:400;color:#666;">19.59994</div>
<div class="b" style="left:135.40px;top:1165.70px;width:664.90px;height:41.20px;background:#efefef;border:1.6px solid #d3d3d3;border-radius:5px;box-sizing:border-box;"></div>
<div class="t" style="left:151.00px;top:1177.63px;font-size:17.8px;line-height:17.8px;font-weight:400;color:#999;">Annual Leave (Days)</div>
<svg class="b" style="left:782.50px;top:1182.60px;width:13.50px;height:9.30px;" viewBox="0 0 13.5 9.3" preserveAspectRatio="none"><path d="M1.7 1.7L6.75 6.9L11.8 1.7" stroke="#585858" stroke-width="3.2" fill="none"/></svg>
<div class="b" style="left:816.30px;top:1165.70px;width:341.90px;height:41.20px;background:#fff;border:1.6px solid #c9c9c9;border-radius:5px;box-sizing:border-box;"></div>
<div class="t" style="left:826.50px;top:1177.63px;font-size:17.8px;line-height:17.8px;font-weight:400;color:#aaa;">Notes</div>
<div class="t" style="left:1181.00px;top:1170.58px;font-size:19.75px;line-height:19.75px;font-weight:400;color:#666;">Automatically Accrued</div>
<div class="t" style="right:335.30px;top:1175.70px;font-size:18.9px;line-height:18.9px;font-weight:400;color:#555;-webkit-text-stroke:0.55px #555;">Days</div>
<svg class="b" style="left:1661.10px;top:1175.30px;width:16.50px;height:16.50px;" viewBox="0 0 16.5 16.5" preserveAspectRatio="none"><path d="M12.2 0.8L15.7 4.3L5.2 14.8L1.7 11.3Z" fill="#6e9de0"/><path d="M1.4 11.9L4.6 15.1L0.6 16Z" fill="#6e9de0"/><path d="M11 2.2L14.3 5.5" stroke="#fff" stroke-width="0.9" opacity="0.8"/><path d="M2.4 12.4L4.1 14.1" stroke="#fff" stroke-width="0.8" opacity="0.7"/></svg>
<div class="b" style="left:1738.40px;top:1165.70px;width:145.60px;height:41.20px;background:#efefef;border:1.6px solid #d3d3d3;border-radius:5px;box-sizing:border-box;"></div>
<div class="t" style="left:1747.60px;top:1175.93px;font-size:19.1px;line-height:19.1px;font-weight:400;color:#666;">1.25</div>
<div class="b" style="left:135.40px;top:1223.70px;width:664.90px;height:41.20px;background:#efefef;border:1.6px solid #d3d3d3;border-radius:5px;box-sizing:border-box;"></div>
<div class="t" style="left:151.00px;top:1235.63px;font-size:17.8px;line-height:17.8px;font-weight:400;color:#999;">Mental Health Leave</div>
<svg class="b" style="left:782.50px;top:1240.60px;width:13.50px;height:9.30px;" viewBox="0 0 13.5 9.3" preserveAspectRatio="none"><path d="M1.7 1.7L6.75 6.9L11.8 1.7" stroke="#585858" stroke-width="3.2" fill="none"/></svg>
<div class="b" style="left:816.30px;top:1223.70px;width:341.90px;height:41.20px;background:#fff;border:1.6px solid #c9c9c9;border-radius:5px;box-sizing:border-box;"></div>
<div class="t" style="left:826.50px;top:1235.63px;font-size:17.8px;line-height:17.8px;font-weight:400;color:#aaa;">Notes</div>
<div class="t" style="left:1181.00px;top:1228.58px;font-size:19.75px;line-height:19.75px;font-weight:400;color:#666;">Automatically Accrued</div>
<div class="t" style="right:335.30px;top:1233.70px;font-size:18.9px;line-height:18.9px;font-weight:400;color:#555;-webkit-text-stroke:0.55px #555;">Days</div>
<svg class="b" style="left:1661.10px;top:1233.30px;width:16.50px;height:16.50px;" viewBox="0 0 16.5 16.5" preserveAspectRatio="none"><path d="M12.2 0.8L15.7 4.3L5.2 14.8L1.7 11.3Z" fill="#6e9de0"/><path d="M1.4 11.9L4.6 15.1L0.6 16Z" fill="#6e9de0"/><path d="M11 2.2L14.3 5.5" stroke="#fff" stroke-width="0.9" opacity="0.8"/><path d="M2.4 12.4L4.1 14.1" stroke="#fff" stroke-width="0.8" opacity="0.7"/></svg>
<div class="b" style="left:1738.40px;top:1223.70px;width:145.60px;height:41.20px;background:#efefef;border:1.6px solid #d3d3d3;border-radius:5px;box-sizing:border-box;"></div>
<div class="t" style="left:1747.60px;top:1233.93px;font-size:19.1px;line-height:19.1px;font-weight:400;color:#666;">0.83333</div>
<div class="b" style="left:135.40px;top:1281.70px;width:664.90px;height:41.20px;background:#efefef;border:1.6px solid #d3d3d3;border-radius:5px;box-sizing:border-box;"></div>
<div class="t" style="left:151.00px;top:1293.63px;font-size:17.8px;line-height:17.8px;font-weight:400;color:#999;">Sick Leave</div>
<svg class="b" style="left:782.50px;top:1298.60px;width:13.50px;height:9.30px;" viewBox="0 0 13.5 9.3" preserveAspectRatio="none"><path d="M1.7 1.7L6.75 6.9L11.8 1.7" stroke="#585858" stroke-width="3.2" fill="none"/></svg>
<div class="b" style="left:816.30px;top:1281.70px;width:341.90px;height:41.20px;background:#fff;border:1.6px solid #c9c9c9;border-radius:5px;box-sizing:border-box;"></div>
<div class="t" style="left:826.50px;top:1293.63px;font-size:17.8px;line-height:17.8px;font-weight:400;color:#aaa;">Notes</div>
<div class="t" style="left:1181.00px;top:1286.58px;font-size:19.75px;line-height:19.75px;font-weight:400;color:#666;">Automatically Accrued</div>
<div class="t" style="right:335.30px;top:1291.70px;font-size:18.9px;line-height:18.9px;font-weight:400;color:#555;-webkit-text-stroke:0.55px #555;">Hours</div>
<svg class="b" style="left:1652.60px;top:1291.30px;width:16.50px;height:16.50px;" viewBox="0 0 16.5 16.5" preserveAspectRatio="none"><path d="M12.2 0.8L15.7 4.3L5.2 14.8L1.7 11.3Z" fill="#6e9de0"/><path d="M1.4 11.9L4.6 15.1L0.6 16Z" fill="#6e9de0"/><path d="M11 2.2L14.3 5.5" stroke="#fff" stroke-width="0.9" opacity="0.8"/><path d="M2.4 12.4L4.1 14.1" stroke="#fff" stroke-width="0.8" opacity="0.7"/></svg>
<div class="b" style="left:1738.40px;top:1281.70px;width:145.60px;height:41.20px;background:#efefef;border:1.6px solid #d3d3d3;border-radius:5px;box-sizing:border-box;"></div>
<div class="t" style="left:1747.60px;top:1291.93px;font-size:19.1px;line-height:19.1px;font-weight:400;color:#666;">6.99972</div>
<div class="b" style="left:135.40px;top:1339.70px;width:664.90px;height:41.20px;background:#efefef;border:1.6px solid #d3d3d3;border-radius:5px;box-sizing:border-box;"></div>
<div class="t" style="left:151.00px;top:1351.63px;font-size:17.8px;line-height:17.8px;font-weight:400;color:#999;">Training Leave</div>
<svg class="b" style="left:782.50px;top:1356.60px;width:13.50px;height:9.30px;" viewBox="0 0 13.5 9.3" preserveAspectRatio="none"><path d="M1.7 1.7L6.75 6.9L11.8 1.7" stroke="#585858" stroke-width="3.2" fill="none"/></svg>
<div class="b" style="left:816.30px;top:1339.70px;width:341.90px;height:41.20px;background:#fff;border:1.6px solid #c9c9c9;border-radius:5px;box-sizing:border-box;"></div>
<div class="t" style="left:826.50px;top:1351.63px;font-size:17.8px;line-height:17.8px;font-weight:400;color:#aaa;">Notes</div>
<div class="t" style="left:1181.00px;top:1344.58px;font-size:19.75px;line-height:19.75px;font-weight:400;color:#666;">Automatically Accrued</div>
<div class="t" style="right:335.30px;top:1349.70px;font-size:18.9px;line-height:18.9px;font-weight:400;color:#555;-webkit-text-stroke:0.55px #555;">Weeks</div>
<svg class="b" style="left:1642.80px;top:1349.30px;width:16.50px;height:16.50px;" viewBox="0 0 16.5 16.5" preserveAspectRatio="none"><path d="M12.2 0.8L15.7 4.3L5.2 14.8L1.7 11.3Z" fill="#6e9de0"/><path d="M1.4 11.9L4.6 15.1L0.6 16Z" fill="#6e9de0"/><path d="M11 2.2L14.3 5.5" stroke="#fff" stroke-width="0.9" opacity="0.8"/><path d="M2.4 12.4L4.1 14.1" stroke="#fff" stroke-width="0.8" opacity="0.7"/></svg>
<div class="b" style="left:1738.40px;top:1339.70px;width:145.60px;height:41.20px;background:#efefef;border:1.6px solid #d3d3d3;border-radius:5px;box-sizing:border-box;"></div>
<div class="t" style="left:1747.60px;top:1349.93px;font-size:19.1px;line-height:19.1px;font-weight:400;color:#666;">0.16667</div>
<div class="t" style="left:127.80px;top:1465.61px;font-size:24.44px;line-height:24.44px;font-weight:400;color:#545b62;-webkit-text-stroke:0.71px #545b62;">Notes for this Pay Run</div>
<div class="b" style="left:127.70px;top:1513.00px;width:1805.90px;height:70.00px;background:#fff;border:1.6px solid #c9c9c9;border-radius:5px;box-sizing:border-box;"></div>
<svg class="b" style="left:1921.00px;top:1571.00px;width:10.00px;height:10.00px;" viewBox="0 0 10 10" preserveAspectRatio="none"><path d="M9 1L1 9M9 5L5 9" stroke="#888" stroke-width="1.1"/></svg>
<div class="t" style="left:131.90px;top:1605.30px;font-size:19.25px;line-height:19.25px;font-weight:400;color:#8fb0d8;">Cancel</div>
<div class="b" style="left:1207.30px;top:1591.40px;width:308.30px;height:54.40px;background:#eff3f7;border:1.5px solid #e3e7eb;border-radius:5px;box-sizing:border-box;"></div>
<svg class="b" style="left:1214.60px;top:1607.50px;width:18.10px;height:19.80px;" viewBox="0 0 18.1 19.8" preserveAspectRatio="none"><rect x="0" y="0" width="18.1" height="19.8" rx="1.8" fill="#5d6770"/><rect x="1.35" y="1.4" width="15.4" height="4" rx="0.3" fill="#eff3f7"/><rect x="1.37" y="7.32" width="2.6" height="2.5" rx="0.5" fill="#eff3f7"/><rect x="5.50" y="7.32" width="2.6" height="2.5" rx="0.5" fill="#eff3f7"/><rect x="9.77" y="7.32" width="2.6" height="2.5" rx="0.5" fill="#eff3f7"/><rect x="1.37" y="11.45" width="2.6" height="2.5" rx="0.5" fill="#eff3f7"/><rect x="5.50" y="11.45" width="2.6" height="2.5" rx="0.5" fill="#eff3f7"/><rect x="9.77" y="11.45" width="2.6" height="2.5" rx="0.5" fill="#eff3f7"/><rect x="1.37" y="15.72" width="2.6" height="2.5" rx="0.5" fill="#eff3f7"/><rect x="5.50" y="15.72" width="2.6" height="2.5" rx="0.5" fill="#eff3f7"/><rect x="9.77" y="15.72" width="2.6" height="2.5" rx="0.5" fill="#eff3f7"/><rect x="14.03" y="7.32" width="2.6" height="2.5" rx="0.5" fill="#eff3f7"/><rect x="14.03" y="11.4" width="2.6" height="6.9" rx="1.2" fill="#eff3f7"/></svg>
<div class="t" style="left:1244.20px;top:1608.25px;font-size:19.32px;line-height:19.32px;font-weight:400;color:#5c6670;-webkit-text-stroke:0.56px #5c6670;">NMW/NLW calculation details</div>
<div class="b" style="left:1522.40px;top:1591.40px;width:187.10px;height:54.40px;background:#eff3f7;border:1.5px solid #e3e7eb;border-radius:5px;box-sizing:border-box;"></div>
<svg class="b" style="left:1530.00px;top:1609.00px;width:15.50px;height:15.50px;" viewBox="0 0 16 16" preserveAspectRatio="none"><path d="M14.6 0.6C15.6 1.4 15.2 3 14 4.2L11.3 6.9L13.2 14.4L11.6 16L8.4 9.8L5.9 12.2L6.4 14.6L5.2 15.8L3.8 12.4L0.4 11L1.6 9.8L4 10.3L6.5 7.8L0.2 4.6L1.8 3L9.3 4.9L12 2.2C13.2 1 13.8 0 14.6 0.6Z" fill="#5d6770"/></svg>
<div class="t" style="left:1555.30px;top:1608.48px;font-size:19.04px;line-height:19.04px;font-weight:400;color:#5c6670;-webkit-text-stroke:0.55px #5c6670;">Leave Balances</div>
<div class="b" style="left:1712.30px;top:1589.20px;width:101.20px;height:60.80px;background:#e1390f;border-radius:4.5px;"></div>
<div class="b" style="left:1717.00px;top:1593.50px;width:92.80px;height:51.20px;background:#7ed321;border-radius:3px;"></div>
<svg class="b" style="left:1723.40px;top:1608.50px;width:17.10px;height:17.00px;" viewBox="0 0 17 17" preserveAspectRatio="none"><path d="M1 1H13L16 4V16H1Z" fill="none" stroke="#e9ffd0" stroke-width="1.8"/><rect x="4" y="1.5" width="8" height="4.5" fill="none" stroke="#e9ffd0" stroke-width="1.5"/><rect x="3.8" y="9" width="9.4" height="6" fill="none" stroke="#e9ffd0" stroke-width="1.5"/></svg>
<div class="t" style="left:1749.80px;top:1608.70px;font-size:18.78px;line-height:18.78px;font-weight:400;color:#e6f8c6;-webkit-text-stroke:0.54px #e6f8c6;">Save</div>
<div class="b" style="left:1817.30px;top:1591.00px;width:116.30px;height:55.40px;background:#7620d8;border-radius:5px;"></div>
<div class="t" style="left:1835.20px;top:1608.34px;font-size:19.21px;line-height:19.21px;font-weight:400;color:#fff;-webkit-text-stroke:0.56px #fff;">Actions</div>
<svg class="b" style="left:1904.80px;top:1612.50px;width:11.00px;height:6.00px;" viewBox="0 0 11 6" preserveAspectRatio="none"><path d="M0 6H11L5.5 0z" fill="#fff"/></svg>
</body></html>
